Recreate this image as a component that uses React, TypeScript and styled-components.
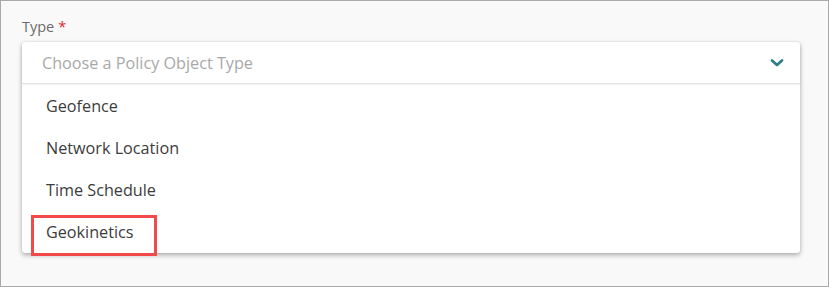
import styled, { createGlobalStyle } from 'styled-components';

const GlobalStyle = createGlobalStyle`
  html, body {
    margin: 0;
    padding: 0;
    background: #ffffff;
  }
  body {
    font-family: "Open Sans", "Liberation Sans", sans-serif;
  }
`;

// outer frame of the screenshot
const Frame = styled.div`
  box-sizing: border-box;
  width: 829px;
  height: 287px;
  border: 1px solid #a9a9a9;
  background: #f9f9f9;
  padding: 16px 28px 0 21px;
`;

const Label = styled.div`
  font-size: 14.5px;
  line-height: 19px;
  color: #6b6b6b;
  margin-bottom: 6px;
`;

const Required = styled.span`
  color: #e0262b;
  margin-left: 4px;
`;

const Dropdown = styled.div`
  position: relative;
  width: 778px;
  background: #fff;
  border-radius: 3px;
  box-shadow: 0 2px 5px rgba(0, 0, 0, 0.32), 0 0 2px rgba(0, 0, 0, 0.08);
`;

const Header = styled.div`
  display: flex;
  align-items: center;
  justify-content: space-between;
  height: 41px;
  padding: 0 16px 0 20px;
  border-bottom: 1px solid #e2e2e2;
  box-shadow: 0 1px 2px rgba(0, 0, 0, 0.06);
`;

const Placeholder = styled.span`
  font-size: 16.2px;
  color: #a8a8a8;
`;

const Chevron = styled.svg`
  width: 14px;
  height: 10px;
`;

const List = styled.ul`
  list-style: none;
  margin: 0;
  padding: 1px 0 0;
`;

const Item = styled.li`
  height: 42px;
  display: flex;
  align-items: center;
  padding-left: 24px;
  font-size: 16.2px;
  color: #3c3c3c;
`;

// red annotation box drawn over the last option
const Highlight = styled.div`
  position: absolute;
  left: 9px;
  top: 173px;
  width: 126px;
  height: 41px;
  box-sizing: border-box;
  border: 3px solid #f24a4a;
  pointer-events: none;
`;

const options = ['Geofence', 'Network Location', 'Time Schedule', 'Geokinetics'];

export default function App() {
  return (
    <>
      <GlobalStyle />
      <Frame>
        <Label>
          Type<Required>*</Required>
        </Label>
        <Dropdown>
          <Header>
            <Placeholder>Choose a Policy Object Type</Placeholder>
            <Chevron viewBox="0 0 14 10">
              <path
                d="M2 2.5 L7 7 L12 2.5"
                fill="none"
                stroke="#2f7d89"
                strokeWidth="2.8"
                strokeLinecap="round"
                strokeLinejoin="round"
              />
            </Chevron>
          </Header>
          <List>
            {options.map(o => (
              <Item key={o}>{o}</Item>
            ))}
          </List>
          <Highlight />
        </Dropdown>
      </Frame>
    </>
  );
}
